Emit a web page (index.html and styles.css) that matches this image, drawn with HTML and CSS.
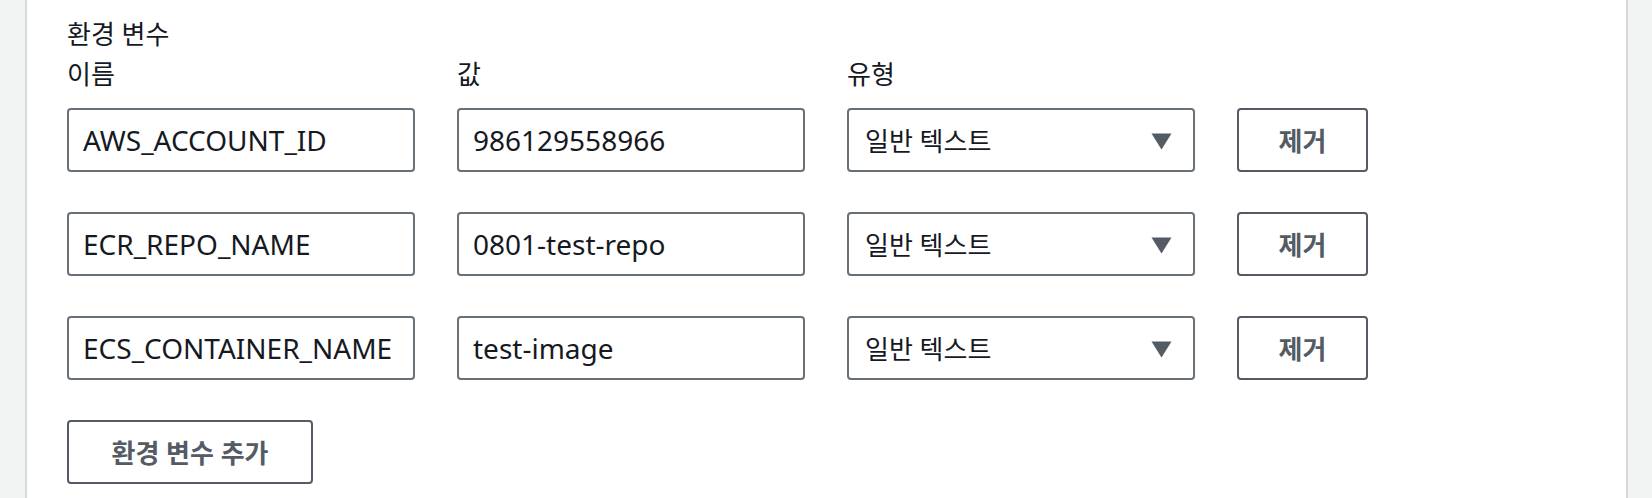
FILE: index.html
```html
<!DOCTYPE html>
<html lang="ko">
<head>
<meta charset="utf-8">
<title>환경 변수</title>
<link rel="stylesheet" href="styles.css">
</head>
<body>
<div class="page">
  <section class="card">
    <h2 class="heading">환경 변수</h2>
    <div class="labels">
      <div class="label">이름</div>
      <div class="label">값</div>
      <div class="label">유형</div>
      <div></div>
    </div>
    <div class="grid">
      <div class="field">AWS_ACCOUNT_ID</div>
      <div class="field">986129558966</div>
      <div class="select"><span>일반 텍스트</span><svg class="caret" width="21" height="17" viewBox="0 0 21 17"><polygon points="0.5,0.5 20.5,0.5 10.5,16.5" /></svg></div>
      <button class="btn">제거</button>

      <div class="field">ECR_REPO_NAME</div>
      <div class="field">0801-test-repo</div>
      <div class="select"><span>일반 텍스트</span><svg class="caret" width="21" height="17" viewBox="0 0 21 17"><polygon points="0.5,0.5 20.5,0.5 10.5,16.5" /></svg></div>
      <button class="btn">제거</button>

      <div class="field">ECS_CONTAINER_NAME</div>
      <div class="field">test-image</div>
      <div class="select"><span>일반 텍스트</span><svg class="caret" width="21" height="17" viewBox="0 0 21 17"><polygon points="0.5,0.5 20.5,0.5 10.5,16.5" /></svg></div>
      <button class="btn">제거</button>
    </div>
    <button class="btn add">환경 변수 추가</button>
  </section>
</div>
</body>
</html>
```

FILE: styles.css
```css
* { box-sizing: border-box; }
html, body { margin: 0; padding: 0; }
body {
  background: #f2f3f3;
  font-family: "Noto Sans", "Noto Sans CJK KR", sans-serif;
  color: #16191f;
}
.page {
  height: 498px;
  overflow: hidden;
  padding: 0 24px 0 25px;
}
.card {
  height: 100%;
  background: #fff;
  border-left: 2px solid #d5dbdb;
  border-right: 2px solid #d5dbdb;
  padding: 14px 40px 0 40px;
}
.heading {
  margin: 0;
  font-size: 26px;
  font-weight: 400;
  line-height: 40px;
}
.labels, .grid {
  display: grid;
  grid-template-columns: 348px 348px 348px 131px;
  column-gap: 42px;
}
.labels {
  margin-bottom: 14px;
}
.grid {
  grid-auto-rows: 64px;
  row-gap: 40px;
}
.label {
  font-size: 26px;
  line-height: 40px;
}
.field, .select {
  border: 2px solid #687078;
  border-radius: 4px;
  display: flex;
  align-items: center;
  padding: 0 14px;
  font-size: 28px;
  color: #16191f;
  white-space: nowrap;
  overflow: hidden;
}
.select {
  justify-content: space-between;
  padding: 0 21px 0 16px;
  font-size: 26px;
}
.caret { fill: #545b64; margin-top: 2px; }
.btn {
  border: 2px solid #545b64;
  border-radius: 4px;
  background: #fff;
  font-family: "Noto Sans", "Noto Sans CJK KR", sans-serif;
  font-size: 26px;
  font-weight: 700;
  color: #545b64;
  padding: 0;
}
.add {
  margin-top: 40px;
  width: 246px;
  height: 64px;
}
```
